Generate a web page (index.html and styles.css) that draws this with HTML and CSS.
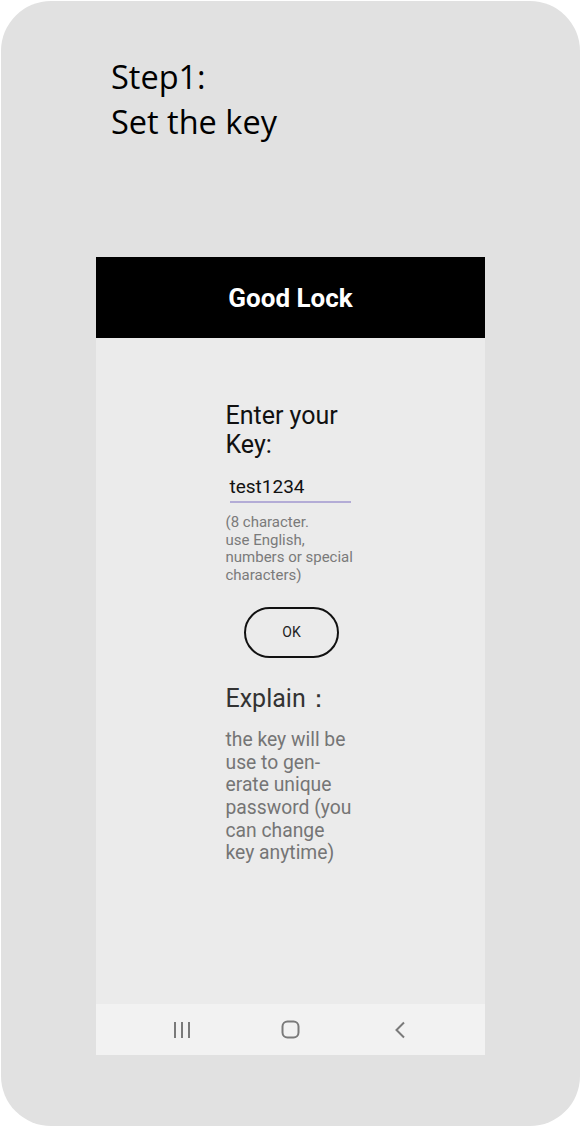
FILE: index.html
```html
<!DOCTYPE html>
<html lang="en">
<head>
<meta charset="utf-8">
<title>Good Lock - Step 1</title>
<link rel="stylesheet" href="styles.css">
</head>
<body>
<div class="frame">
  <h1 class="step-title">Step1:<br>Set the key</h1>
  <div class="phone">
    <header class="app-bar">Good Lock</header>
    <main class="screen">
      <div class="column">
        <h2 class="key-label">Enter your Key:</h2>
        <div class="key-input">test1234</div>
        <p class="hint">(8 character.<br>use English,<br>numbers or special<br>characters)</p>
        <div class="btn-row"><button class="ok-btn">OK</button></div>
        <h2 class="explain-title">Explain：</h2>
        <p class="explain-text">the key will be<br>use to gen-<br>erate unique<br>password (you<br>can change<br>key anytime)</p>
      </div>
    </main>
    <nav class="nav-bar">
      <span class="nav-slot">
        <svg width="18" height="18" viewBox="0 0 18 18"><path d="M2 1v16M9 1v16M16 1v16" stroke="#7a7a7a" stroke-width="2" fill="none"/></svg>
      </span>
      <span class="nav-slot">
        <svg width="19" height="19" viewBox="0 0 19 19"><rect x="1.5" y="1.5" width="16" height="16" rx="5" stroke="#7a7a7a" stroke-width="2" fill="none"/></svg>
      </span>
      <span class="nav-slot">
        <svg width="12" height="18" viewBox="0 0 12 18"><path d="M10 1.5L2.5 9L10 16.5" stroke="#7a7a7a" stroke-width="2" fill="none"/></svg>
      </span>
    </nav>
  </div>
</div>
</body>
</html>
```

FILE: styles.css
```css
html, body {
  margin: 0;
  padding: 0;
  background: #ffffff;
}

.frame {
  margin: 1px;
  width: 579px;
  height: 1125px;
  box-sizing: border-box;
  background: #e1e1e1;
  border-radius: 50px;
  display: flex;
  flex-direction: column;
  padding-top: 53px;
}

.step-title {
  margin: 0 0 0 110px;
  font-family: "Open Sans", "Noto Sans", sans-serif;
  font-weight: 400;
  font-size: 32.5px;
  line-height: 45px;
  color: #000;
  height: 203px;
}

.phone {
  margin-left: 95px;
  width: 389px;
  display: flex;
  flex-direction: column;
  font-family: Roboto, "Noto Sans", sans-serif;
}

.app-bar {
  height: 81px;
  background: #000;
  color: #fff;
  font-weight: 700;
  font-size: 26px;
  display: flex;
  align-items: center;
  justify-content: center;
  padding-top: 1px;
  box-sizing: border-box;
}

.screen {
  height: 666px;
  background: #ebebeb;
}

.column {
  width: 130px;
  margin: 0 auto;
  padding-top: 63px;
  display: flex;
  flex-direction: column;
}

.key-label {
  margin: 0;
  font-weight: 400;
  font-size: 25px;
  line-height: 29px;
  color: #111;
}

.key-input {
  margin: 16px 0 0 4px;
  width: 121px;
  font-size: 19px;
  line-height: 23px;
  color: #111;
  padding: 0 0 3px 0;
  border-bottom: 2px solid #b3acd6;
}

.hint {
  margin: 11px 0 0 0;
  font-size: 15px;
  line-height: 17.7px;
  color: #7a7a7a;
}

.btn-row {
  margin-top: 22px;
  display: flex;
  justify-content: center;
}

.ok-btn {
  width: 95px;
  height: 51px;
  border: 2px solid #111;
  border-radius: 26px;
  background: transparent;
  font-family: Roboto, "Noto Sans", sans-serif;
  font-size: 14px;
  color: #222;
  padding: 0;
  margin-left: 2px;
}

.explain-title {
  margin: 26px 0 0 0;
  font-weight: 400;
  font-size: 25px;
  line-height: 29px;
  color: #333;
}

.explain-text {
  margin: 16px 0 0 0;
  font-size: 19.3px;
  line-height: 22.7px;
  color: #757575;
}

.nav-bar {
  height: 51px;
  background: #f2f2f2;
  display: flex;
  justify-content: center;
  align-items: center;
}

.nav-slot {
  width: 109px;
  display: flex;
  justify-content: center;
  align-items: center;
}

.nav-slot svg {
  display: block;
}
```
